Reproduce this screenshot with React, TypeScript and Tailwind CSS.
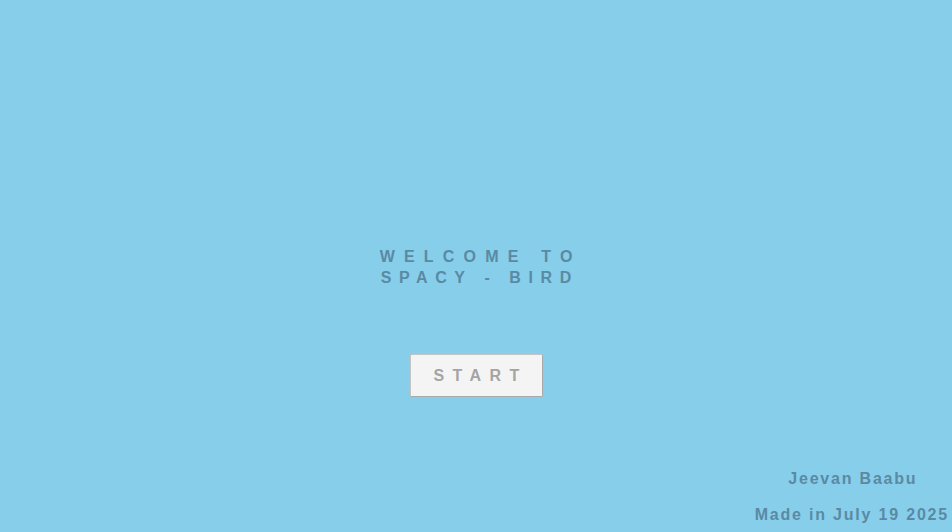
export default function App() {
  return (
    <div className="relative flex h-[532px] w-full flex-col items-center bg-[#87ceeb] font-['Liberation_Sans',Arial,sans-serif] font-bold">
      <h1 className="mt-[246px] flex flex-col items-center text-[16px] leading-[21px] text-[#5a8aa3]">
        <span className="pl-[9.2px] tracking-[9.2px]">WELCOME TO</span>
        <span className="pl-[7.6px] tracking-[7.6px]">SPACY - BIRD</span>
      </h1>
      <button className="mt-[66px] h-[43px] w-[133px] rounded-[2px] border border-[#c4c4c4] border-r-[#a9a9a9] border-b-[#a9a9a9] bg-[#f4f4f4] pl-[9px] text-[16px] tracking-[8.4px] text-[#a4a4a4]">
        START
      </button>
      <div className="mt-auto mb-[7px] flex flex-col items-center gap-[15px] self-end pr-[3px] text-[16px] leading-[21px] tracking-[1.8px] text-[#5a8aa3]">
        <span className="pl-[2px]">Jeevan Baabu</span>
        <span>Made in July 19 2025</span>
      </div>
    </div>
  );
}
